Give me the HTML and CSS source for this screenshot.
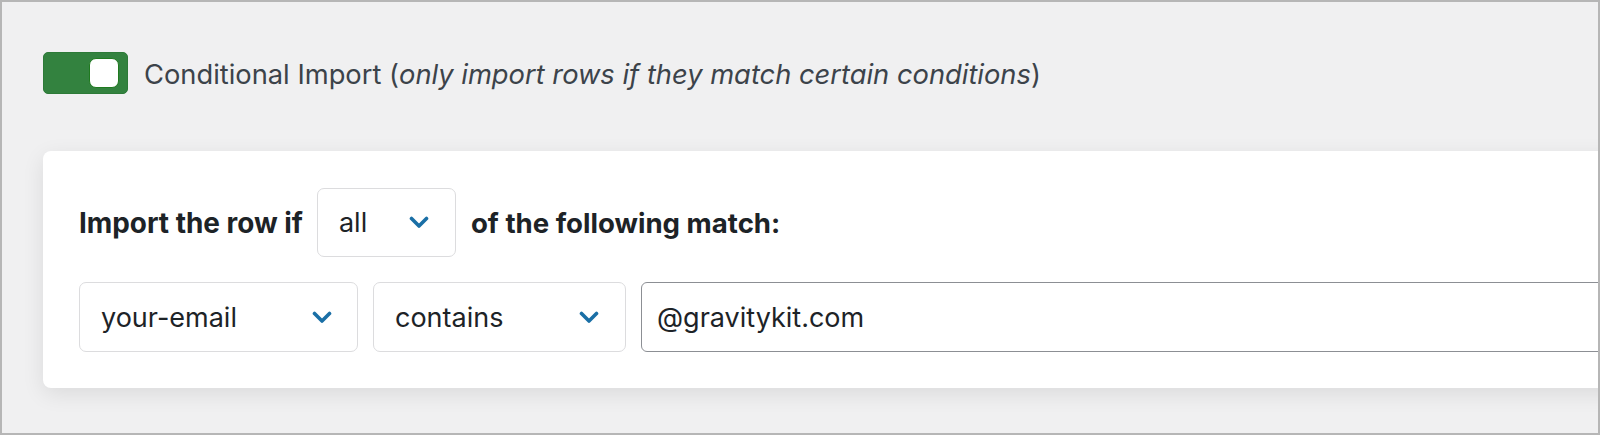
FILE: index.html
```html
<!DOCTYPE html>
<html>
<head>
<meta charset="utf-8">
<link rel="stylesheet" href="styles.css">
</head>
<body>
<div class="page">
  <div class="toggle-row">
    <span class="toggle"><span class="knob"></span></span>
    <span class="toggle-label">Conditional Import (<em>only import rows if they match certain conditions</em>)</span>
  </div>
  <div class="card">
    <div class="row row-head">
      <span class="head-text">Import the row if</span>
      <div class="select select-all"><span>all</span><svg class="chev" viewBox="0 0 20 13"><polyline points="2.5,2.5 10,10 17.5,2.5"/></svg></div>
      <span class="head-text head-tail">of the following match:</span>
    </div>
    <div class="row row-cond">
      <div class="select select-field"><span>your-email</span><svg class="chev" viewBox="0 0 20 13"><polyline points="2.5,2.5 10,10 17.5,2.5"/></svg></div>
      <div class="select select-op"><span>contains</span><svg class="chev" viewBox="0 0 20 13"><polyline points="2.5,2.5 10,10 17.5,2.5"/></svg></div>
      <div class="input">@gravitykit.com</div>
    </div>
  </div>
</div>
</body>
</html>
```

FILE: styles.css
```css
html, body {
  margin: 0;
  padding: 0;
}
body {
  width: 1600px;
  height: 435px;
  overflow: hidden;
  background: #f0f0f1;
  font-family: "Inter", "Liberation Sans", sans-serif;
  color: #2c3338;
}
.page {
  box-sizing: border-box;
  width: 1600px;
  height: 435px;
  border: 2px solid #b6b6b6;
  overflow: hidden;
  padding: 50px 0 0 41px;
}
.toggle-row {
  display: flex;
  align-items: center;
  gap: 16px;
  height: 42px;
}
.toggle {
  box-sizing: border-box;
  width: 85px;
  height: 42px;
  border-radius: 5px;
  background: #33823f;
  border: 1px solid #2d7a38;
  display: flex;
  justify-content: flex-end;
  align-items: center;
  padding-right: 8px;
}
.knob {
  box-sizing: border-box;
  width: 30px;
  height: 30px;
  border-radius: 7px;
  background: #fff;
  border: 1px solid #1f7a1f;
}
.toggle-label {
  font-size: 27.3px;
  color: #3c434a;
  padding-top: 2px;
}
.toggle-label em {
  font-style: italic;
}
.card {
  margin-top: 57px;
  width: 1700px;
  height: 237px;
  box-sizing: border-box;
  background: #fff;
  border-radius: 8px;
  box-shadow: 0 6px 22px rgba(0, 0, 0, 0.09);
  padding: 37px 36px 36px 36px;
  display: flex;
  flex-direction: column;
  gap: 25px;
}
.row {
  display: flex;
  align-items: center;
}
.row-head {
  height: 69px;
  gap: 14px;
}
.head-text {
  font-size: 27.9px;
  font-weight: 700;
  color: #1d2327;
}
.head-tail {
  font-size: 27.6px;
  margin-left: 1px;
}
.select {
  box-sizing: border-box;
  height: 100%;
  border: 1px solid #dcdcde;
  border-radius: 7px;
  display: flex;
  align-items: center;
  justify-content: space-between;
  font-size: 27px;
  color: #1d2327;
  background: #fff;
}
.select-all {
  width: 139px;
  padding: 0 26px 0 21px;
}
.row-cond {
  height: 70px;
  gap: 15px;
}
.select-field {
  width: 279px;
  padding: 0 25px 0 21px;
  flex: none;
}
.select-op {
  width: 253px;
  padding: 0 26px 0 21px;
  flex: none;
}
.chev {
  width: 20px;
  height: 13px;
  fill: none;
  stroke: #1a6fa6;
  stroke-width: 3.6;
  stroke-linecap: round;
  stroke-linejoin: round;
}
.input {
  box-sizing: border-box;
  flex: 1;
  height: 100%;
  border: 1.5px solid #8c8f94;
  border-radius: 6px;
  display: flex;
  align-items: center;
  padding-left: 15px;
  font-size: 27px;
  color: #1d2327;
}
```
